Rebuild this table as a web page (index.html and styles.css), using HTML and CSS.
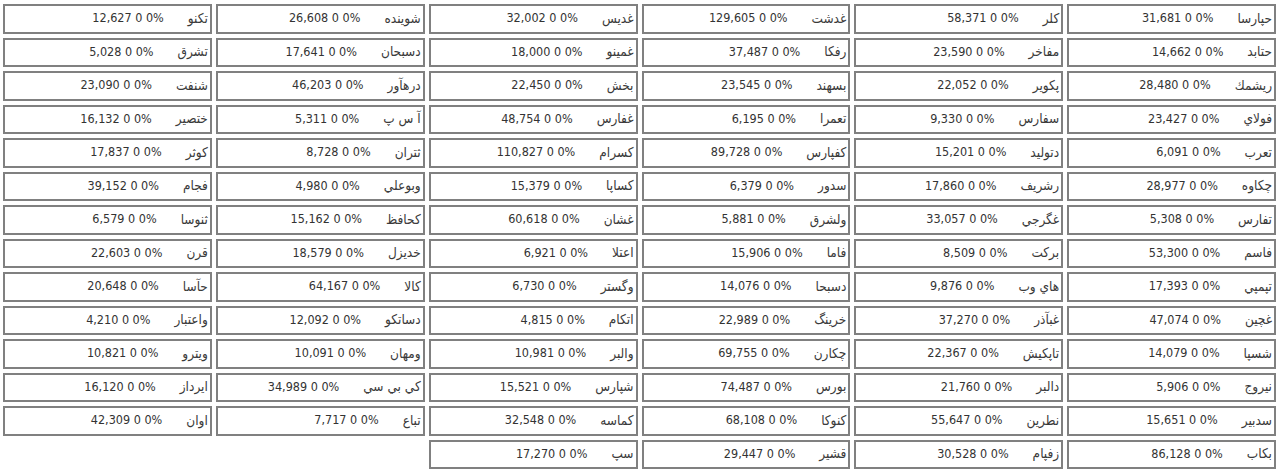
FILE: index.html
```html
<!DOCTYPE html>
<html lang="fa" dir="rtl">
<head>
<meta charset="utf-8">
<title>نمادها</title>
<link rel="stylesheet" href="styles.css">
</head>
<body>
<div class="board">
<div class="cell"><span class="name">حپارسا</span><span class="val" dir="ltr">31,681 0 0%</span></div>
<div class="cell"><span class="name">کلر</span><span class="val" dir="ltr">58,371 0 0%</span></div>
<div class="cell"><span class="name">غدشت</span><span class="val" dir="ltr">129,605 0 0%</span></div>
<div class="cell"><span class="name">غدیس</span><span class="val" dir="ltr">32,002 0 0%</span></div>
<div class="cell"><span class="name">شوینده</span><span class="val" dir="ltr">26,608 0 0%</span></div>
<div class="cell"><span class="name">تکنو</span><span class="val" dir="ltr">12,627 0 0%</span></div>

<div class="cell"><span class="name">حتابد</span><span class="val" dir="ltr">14,662 0 0%</span></div>
<div class="cell"><span class="name">مفاخر</span><span class="val" dir="ltr">23,590 0 0%</span></div>
<div class="cell"><span class="name">رفکا</span><span class="val" dir="ltr">37,487 0 0%</span></div>
<div class="cell"><span class="name">غمینو</span><span class="val" dir="ltr">18,000 0 0%</span></div>
<div class="cell"><span class="name">دسبحان</span><span class="val" dir="ltr">17,641 0 0%</span></div>
<div class="cell"><span class="name">تشرق</span><span class="val" dir="ltr">5,028 0 0%</span></div>

<div class="cell"><span class="name">ریشمك</span><span class="val" dir="ltr">28,480 0 0%</span></div>
<div class="cell"><span class="name">پکویر</span><span class="val" dir="ltr">22,052 0 0%</span></div>
<div class="cell"><span class="name">بسهند</span><span class="val" dir="ltr">23,545 0 0%</span></div>
<div class="cell"><span class="name">بخش</span><span class="val" dir="ltr">22,450 0 0%</span></div>
<div class="cell"><span class="name">درهآور</span><span class="val" dir="ltr">46,203 0 0%</span></div>
<div class="cell"><span class="name">شنفت</span><span class="val" dir="ltr">23,090 0 0%</span></div>

<div class="cell"><span class="name">فولاي</span><span class="val" dir="ltr">23,427 0 0%</span></div>
<div class="cell"><span class="name">سفارس</span><span class="val" dir="ltr">9,330 0 0%</span></div>
<div class="cell"><span class="name">تعمرا</span><span class="val" dir="ltr">6,195 0 0%</span></div>
<div class="cell"><span class="name">غفارس</span><span class="val" dir="ltr">48,754 0 0%</span></div>
<div class="cell"><span class="name">آ س پ</span><span class="val" dir="ltr">5,311 0 0%</span></div>
<div class="cell"><span class="name">ختصير</span><span class="val" dir="ltr">16,132 0 0%</span></div>

<div class="cell"><span class="name">تعرب</span><span class="val" dir="ltr">6,091 0 0%</span></div>
<div class="cell"><span class="name">دتوليد</span><span class="val" dir="ltr">15,201 0 0%</span></div>
<div class="cell"><span class="name">كفپارس</span><span class="val" dir="ltr">89,728 0 0%</span></div>
<div class="cell"><span class="name">كسرام</span><span class="val" dir="ltr">110,827 0 0%</span></div>
<div class="cell"><span class="name">ثتران</span><span class="val" dir="ltr">8,728 0 0%</span></div>
<div class="cell"><span class="name">کوثر</span><span class="val" dir="ltr">17,837 0 0%</span></div>

<div class="cell"><span class="name">چکاوه</span><span class="val" dir="ltr">28,977 0 0%</span></div>
<div class="cell"><span class="name">رشریف</span><span class="val" dir="ltr">17,860 0 0%</span></div>
<div class="cell"><span class="name">سدور</span><span class="val" dir="ltr">6,379 0 0%</span></div>
<div class="cell"><span class="name">كساپا</span><span class="val" dir="ltr">15,379 0 0%</span></div>
<div class="cell"><span class="name">وبوعلي</span><span class="val" dir="ltr">4,980 0 0%</span></div>
<div class="cell"><span class="name">فجام</span><span class="val" dir="ltr">39,152 0 0%</span></div>

<div class="cell"><span class="name">تفارس</span><span class="val" dir="ltr">5,308 0 0%</span></div>
<div class="cell"><span class="name">غگرجي</span><span class="val" dir="ltr">33,057 0 0%</span></div>
<div class="cell"><span class="name">ولشرق</span><span class="val" dir="ltr">5,881 0 0%</span></div>
<div class="cell"><span class="name">غشان</span><span class="val" dir="ltr">60,618 0 0%</span></div>
<div class="cell"><span class="name">كحافظ</span><span class="val" dir="ltr">15,162 0 0%</span></div>
<div class="cell"><span class="name">ثنوسا</span><span class="val" dir="ltr">6,579 0 0%</span></div>

<div class="cell"><span class="name">فاسم</span><span class="val" dir="ltr">53,300 0 0%</span></div>
<div class="cell"><span class="name">بركت</span><span class="val" dir="ltr">8,509 0 0%</span></div>
<div class="cell"><span class="name">فاما</span><span class="val" dir="ltr">15,906 0 0%</span></div>
<div class="cell"><span class="name">اعتلا</span><span class="val" dir="ltr">6,921 0 0%</span></div>
<div class="cell"><span class="name">خديزل</span><span class="val" dir="ltr">18,579 0 0%</span></div>
<div class="cell"><span class="name">قرن</span><span class="val" dir="ltr">22,603 0 0%</span></div>

<div class="cell"><span class="name">تپمپي</span><span class="val" dir="ltr">17,393 0 0%</span></div>
<div class="cell"><span class="name">هاي وب</span><span class="val" dir="ltr">9,876 0 0%</span></div>
<div class="cell"><span class="name">دسبحا</span><span class="val" dir="ltr">14,076 0 0%</span></div>
<div class="cell"><span class="name">وگستر</span><span class="val" dir="ltr">6,730 0 0%</span></div>
<div class="cell"><span class="name">كالا</span><span class="val" dir="ltr">64,167 0 0%</span></div>
<div class="cell"><span class="name">حآسا</span><span class="val" dir="ltr">20,648 0 0%</span></div>

<div class="cell"><span class="name">غچين</span><span class="val" dir="ltr">47,074 0 0%</span></div>
<div class="cell"><span class="name">غبآذر</span><span class="val" dir="ltr">37,270 0 0%</span></div>
<div class="cell"><span class="name">خرينگ</span><span class="val" dir="ltr">22,989 0 0%</span></div>
<div class="cell"><span class="name">اتكام</span><span class="val" dir="ltr">4,815 0 0%</span></div>
<div class="cell"><span class="name">دساتكو</span><span class="val" dir="ltr">12,092 0 0%</span></div>
<div class="cell"><span class="name">واعتبار</span><span class="val" dir="ltr">4,210 0 0%</span></div>

<div class="cell"><span class="name">شسپا</span><span class="val" dir="ltr">14,079 0 0%</span></div>
<div class="cell"><span class="name">تاپكيش</span><span class="val" dir="ltr">22,367 0 0%</span></div>
<div class="cell"><span class="name">چكارن</span><span class="val" dir="ltr">69,755 0 0%</span></div>
<div class="cell"><span class="name">والبر</span><span class="val" dir="ltr">10,981 0 0%</span></div>
<div class="cell"><span class="name">ومهان</span><span class="val" dir="ltr">10,091 0 0%</span></div>
<div class="cell"><span class="name">ويترو</span><span class="val" dir="ltr">10,821 0 0%</span></div>

<div class="cell"><span class="name">نيروج</span><span class="val" dir="ltr">5,906 0 0%</span></div>
<div class="cell"><span class="name">دالبر</span><span class="val" dir="ltr">21,760 0 0%</span></div>
<div class="cell"><span class="name">بورس</span><span class="val" dir="ltr">74,487 0 0%</span></div>
<div class="cell"><span class="name">شپارس</span><span class="val" dir="ltr">15,521 0 0%</span></div>
<div class="cell"><span class="name">كي بي سي</span><span class="val" dir="ltr">34,989 0 0%</span></div>
<div class="cell"><span class="name">ايرداز</span><span class="val" dir="ltr">16,120 0 0%</span></div>

<div class="cell"><span class="name">سدبير</span><span class="val" dir="ltr">15,651 0 0%</span></div>
<div class="cell"><span class="name">نطرين</span><span class="val" dir="ltr">55,647 0 0%</span></div>
<div class="cell"><span class="name">كنوكا</span><span class="val" dir="ltr">68,108 0 0%</span></div>
<div class="cell"><span class="name">كماسه</span><span class="val" dir="ltr">32,548 0 0%</span></div>
<div class="cell"><span class="name">تباع</span><span class="val" dir="ltr">7,717 0 0%</span></div>
<div class="cell"><span class="name">اوان</span><span class="val" dir="ltr">42,309 0 0%</span></div>

<div class="cell"><span class="name">بكاب</span><span class="val" dir="ltr">86,128 0 0%</span></div>
<div class="cell"><span class="name">زفپام</span><span class="val" dir="ltr">30,528 0 0%</span></div>
<div class="cell"><span class="name">قشير</span><span class="val" dir="ltr">29,447 0 0%</span></div>
<div class="cell"><span class="name">سپ</span><span class="val" dir="ltr">17,270 0 0%</span></div>
</div>
</body>
</html>
```

FILE: styles.css
```css
html, body {
  margin: 0;
  padding: 0;
  background: #ffffff;
}

body {
  font-family: "DejaVu Sans Condensed", "DejaVu Sans", "Noto Sans", sans-serif;
  font-size: 12.5px;
  color: #333333;
}

.board {
  direction: rtl;
  display: grid;
  grid-template-columns: repeat(6, 1fr);
  grid-auto-rows: 29.5px;
  column-gap: 4px;
  row-gap: 4px;
  padding: 4px 4px 0 3px;
}

.cell {
  display: flex;
  align-items: center;
  border: 2px solid #808080;
  padding: 0 2px 2px 2px;
  white-space: nowrap;
  overflow: hidden;
}

.name {
  font-size: 13.5px;
  color: #3a3a3a;
  margin-inline-end: 24px;
}

.val {
  unicode-bidi: isolate;
}
```
